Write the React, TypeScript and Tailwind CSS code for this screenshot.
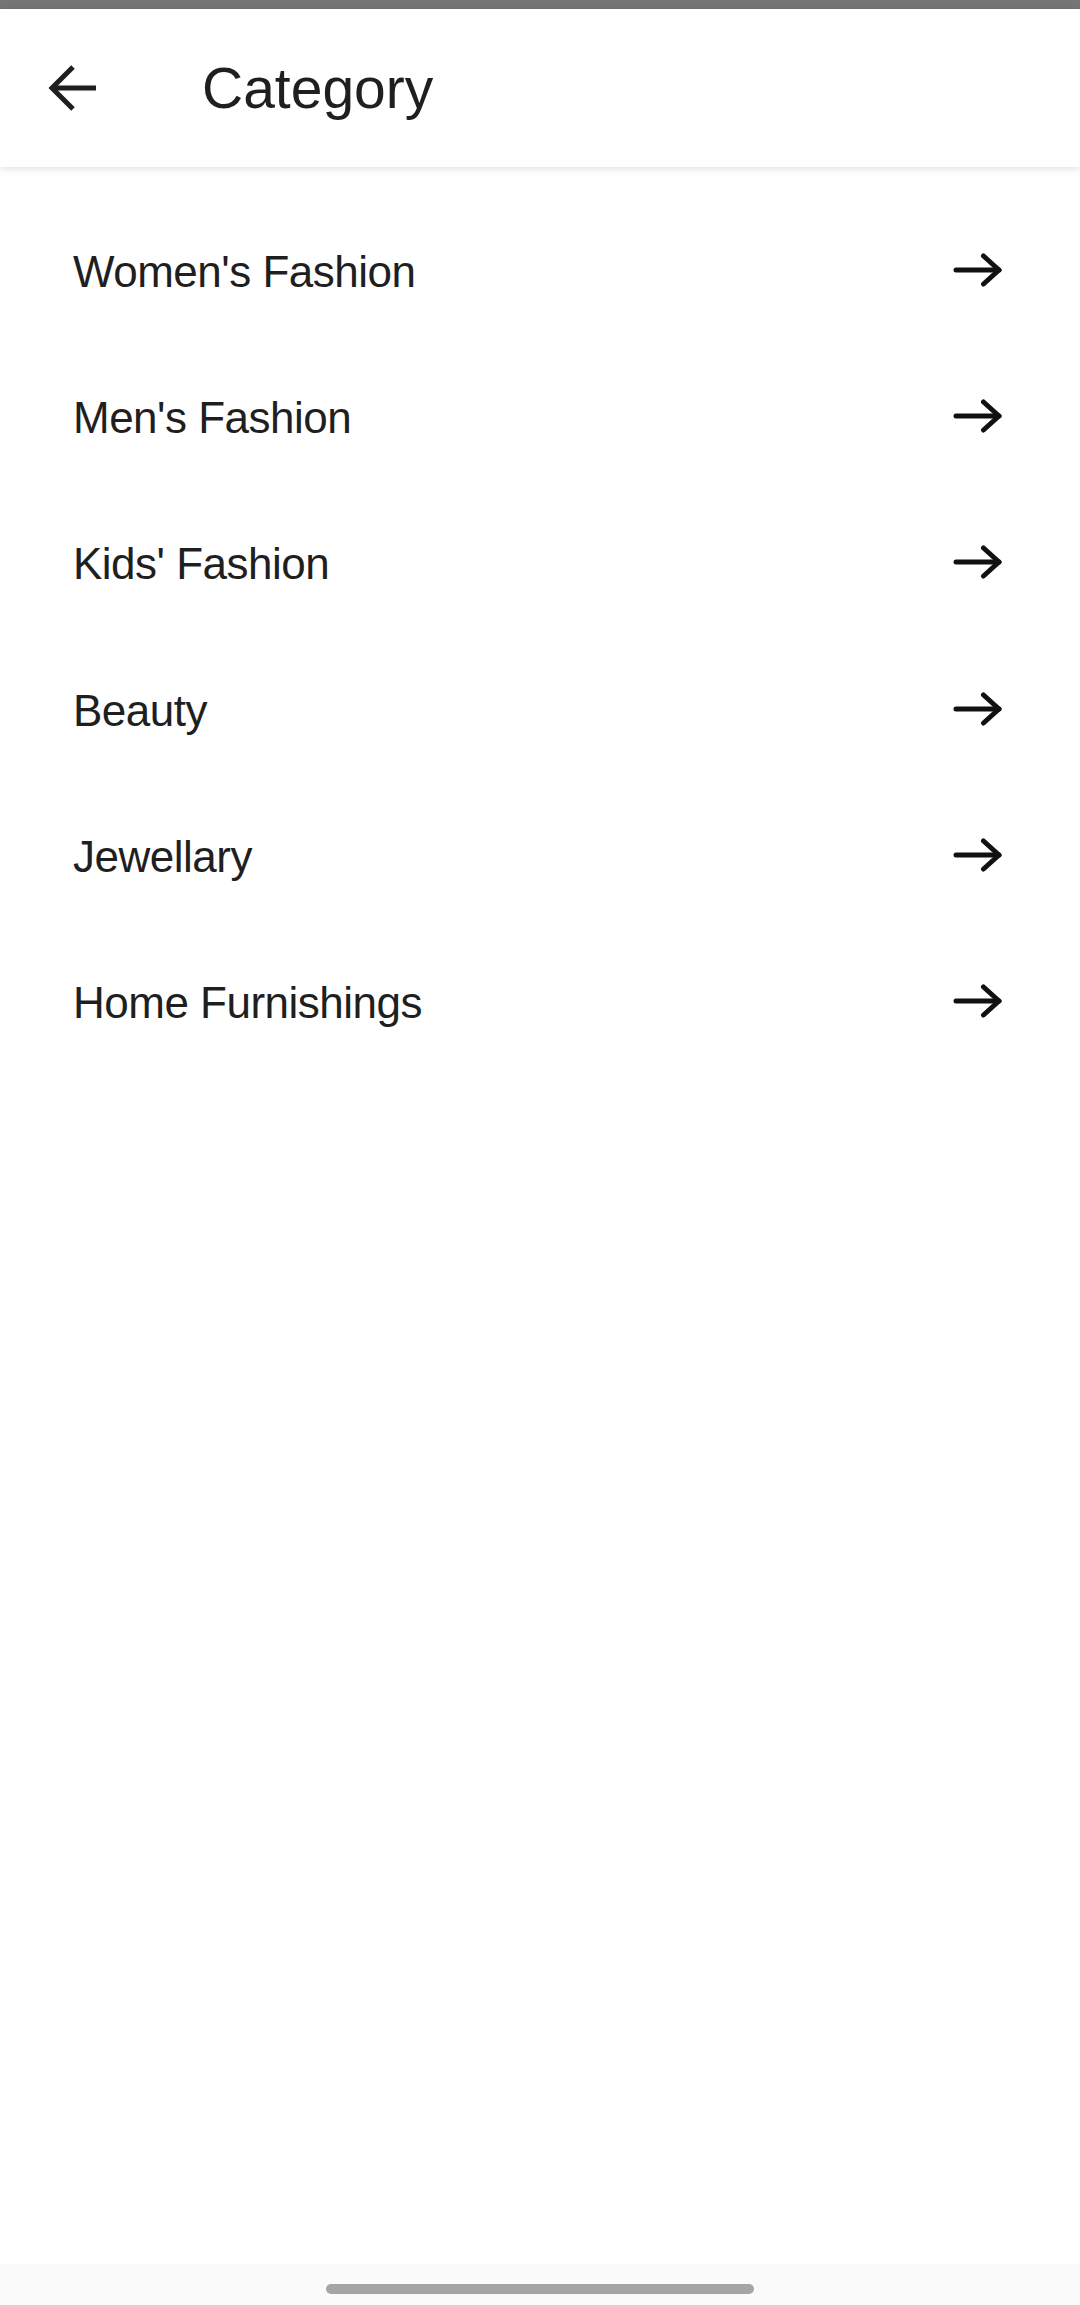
const categories = [
  "Women's Fashion",
  "Men's Fashion",
  "Kids' Fashion",
  'Beauty',
  'Jewellary',
  'Home Furnishings',
];

const BackArrow = () => (
  <svg width="56" height="56" viewBox="0 0 56 56" fill="none" stroke="#1f1f1f" strokeWidth="5">
    <path d="M52 28H8" />
    <path d="M29 7L8 28l21 21" />
  </svg>
);

const RightArrow = () => (
  <svg width="50" height="34" viewBox="0 0 50 34" fill="none" stroke="#111" strokeWidth="5" strokeLinecap="round" strokeLinejoin="round" className="-mt-[4px]">
    <path d="M3 17h43" />
    <path d="M30.5 3L46 17 30.5 31" />
  </svg>
);

export default function App() {
  return (
    <div
      className="w-[1080px] h-[2305px] flex flex-col bg-white text-[#1f1f1f]"
      style={{ fontFamily: '"Liberation Sans", Arial, sans-serif' }}
    >
      {/* status strip */}
      <div className="h-[9px] bg-[#757575]" />

      {/* header */}
      <header className="h-[158px] flex items-center bg-white shadow-[0_2px_7px_rgba(0,0,0,0.12)] relative z-10">
        <button className="ml-[44px] flex items-center">
          <BackArrow />
        </button>
        <h1 className="ml-[102px] text-[57px] leading-none">Category</h1>
      </header>

      {/* list */}
      <ul className="flex flex-col pt-[32px]">
        {categories.map((name) => (
          <li key={name} className="h-[146.2px] flex items-center justify-between pl-[73px] pr-[77px]">
            <span className="text-[44px] tracking-[-0.5px] leading-none">{name}</span>
            <RightArrow />
          </li>
        ))}
      </ul>

      <div className="flex-1" />

      {/* nav bar */}
      <div className="h-[41px] bg-[#fafafa] flex justify-center pt-[20px]">
        <div className="w-[428px] h-[10px] rounded-full bg-[#a5a5a5]" />
      </div>
    </div>
  );
}
